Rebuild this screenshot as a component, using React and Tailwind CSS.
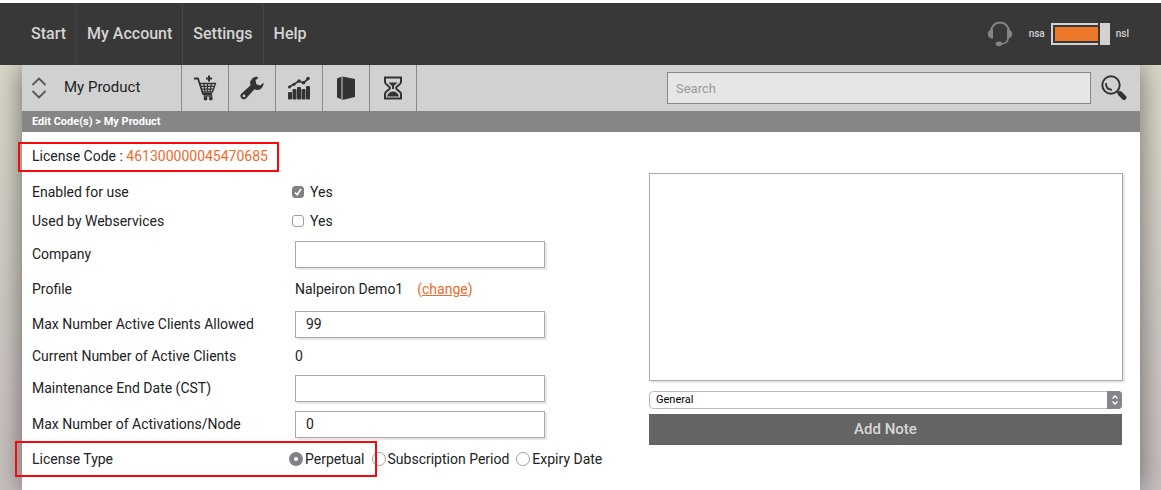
import { useState } from 'react';

const NAV_LINKS = ['Start', 'My Account', 'Settings', 'Help'];

const CartIcon = () => (
  <svg viewBox="0 0 24 26" className="w-6 h-[26px]" fill="none" stroke="#333" strokeWidth="1.8">
    <path d="M1 3.5h4l5 15.5h9" strokeLinejoin="round" />
    <path d="M6 8.5h16.5l-3 8.500H9M7.500 11.300h14M8.400 14.200h12M10.800 8.500l1.200 8.500M14.500 8.500V17M18.400 8.500L17 17" strokeWidth="1.300" />
    <path d="M13 3.500h6M16 .5v6" strokeWidth="2" />
    <path d="M10.500 21h9" strokeWidth="1.500" />
    <circle cx="12.500" cy="23.500" r="1.900" fill="#333" stroke="none" />
    <circle cx="17.800" cy="23.500" r="1.900" fill="#333" stroke="none" />
  </svg>
);

const WrenchIcon = () => (
  <svg viewBox="0 0 24 24" className="w-6 h-6">
    <path
      d="M18.600 1.200a6.300 6.300 0 0 0-8 8.100L1.500 17.500a3.300 3.300 0 0 0 4.700 4.700l8.300-8.900a6.300 6.300 0 0 0 9-6.500l-3.300 2.700-3.800-1.200-.9-3.700zM4 18.600a1.300 1.300 0 1 1 0 2.600 1.300 1.300 0 0 1 0-2.600z"
      fill="#333"
      fillRule="evenodd"
    />
  </svg>
);

const ChartIcon = () => (
  <svg viewBox="0 0 24 24" className="w-6 h-6" fill="#333">
    <rect x="1" y="16" width="4" height="7.500" rx="1" />
    <rect x="5.500" y="13" width="4" height="10.500" rx="1" />
    <rect x="10" y="11" width="4" height="12.500" rx="1" />
    <rect x="14.500" y="13" width="4" height="10.500" rx="1" />
    <rect x="19" y="10" width="4" height="13.500" rx="1" />
    <path d="M2 11l4.500-2.500L12 5l4.500 2L21 3" fill="none" stroke="#333" strokeWidth="1.800" />
    <circle cx="2.500" cy="11" r="1.500" />
    <circle cx="7" cy="8.300" r="1.500" />
    <circle cx="12" cy="5" r="1.700" />
    <circle cx="16.500" cy="6.800" r="1.700" />
    <circle cx="21" cy="2.500" r="1.800" />
  </svg>
);

const BoxIcon = () => (
  <svg viewBox="0 0 20 26" className="w-5 h-[26px]">
    <path d="M1 3.500L6 1.500v23l-5-2z" fill="#333" />
    <path d="M6.500 1.500L19 4v18L6.500 25z" fill="#333" />
    <path d="M5.500 2v22.500" stroke="#999" strokeWidth=".8" />
  </svg>
);

const HourglassIcon = () => (
  <svg viewBox="0 0 20 24" className="w-5 h-6" fill="none" stroke="#333" strokeWidth="2">
    <path d="M2 1.500h16v4.500c0 3-5 4-5 6s5 3 5 6v4.500H2V18c0-3 5-4 5-6S2 9 2 6z" />
    <path d="M5.500 6.500h9L11 10v3h-2v-3z" fill="#333" stroke="none" />
    <path d="M4 20.500c.5-3 3-5 6-5s5.500 2 6 5z" fill="#333" stroke="none" />
  </svg>
);

const HeadsetIcon = () => (
  <svg viewBox="0 0 26 26" className="w-[26px] h-[26px]" fill="none" stroke="#858585">
    <path d="M4 11a9 9.500 0 0 1 18 0" strokeWidth="2" />
    <path d="M6 8.500v9C2 17.500.8 15 .8 13s1.500-4.500 5.200-4.500zM20 8.500v9c4 0 5.200-2.500 5.200-4.500s-1.500-4.500-5.200-4.500z" fill="#858585" stroke="none" />
    <path d="M21.500 16.500c-.5 4-3.500 6.500-8.500 6.500" strokeWidth="1.600" />
    <ellipse cx="12" cy="22.800" rx="3.300" ry="2.400" fill="#858585" stroke="none" />
  </svg>
);

const SearchIcon = () => (
  <svg viewBox="0 0 26 26" className="w-[26px] h-[26px]" fill="none" stroke="#333">
    <circle cx="10" cy="10" r="8.700" strokeWidth="2" />
    <path d="M5 8c-.3 4 2 6.500 6 6.800" strokeWidth="1.800" />
    <path d="M16 16l2.500 2.500" strokeWidth="2" />
    <path d="M19 18.500l4 4" strokeWidth="4.800" strokeLinecap="round" />
  </svg>
);

const TOOLS = [
  { label: 'Add to cart', Icon: CartIcon },
  { label: 'Tools', Icon: WrenchIcon },
  { label: 'Reports', Icon: ChartIcon },
  { label: 'Products', Icon: BoxIcon },
  { label: 'History', Icon: HourglassIcon },
];

const Highlight = ({ className }) => (
  <span className={`absolute border-2 border-[#f80808] pointer-events-none ${className}`} />
);

const Row = ({ label, htmlFor, height = 'h-9', children }) => (
  <div className={`relative flex items-center ${height}`}>
    {htmlFor ? (
      <label htmlFor={htmlFor} className="w-[257px] shrink-0">{label}</label>
    ) : (
      <span className="w-[257px] shrink-0">{label}</span>
    )}
    {children}
  </div>
);

const TextField = ({ id, value = '' }) => (
  <input
    id={id}
    type="text"
    defaultValue={value}
    className="ml-1.5 w-[250px] h-[27px] px-2.5 border border-[#a9a9a9] bg-white shadow-[2px_2px_0_#e8e8e8] outline-none"
  />
);

const Checkbox = ({ id, checked }) => (
  <span className="flex items-center gap-1.5 ml-[3px]">
    <span className="relative grid">
      <input
        id={id}
        type="checkbox"
        defaultChecked={checked}
        className="peer appearance-none w-3 h-3 rounded-[3px] border border-[#a0a0a0] bg-white checked:bg-[#818186] checked:border-[#818186]"
      />
      <svg viewBox="0 0 12 12" className="absolute inset-0 w-3 h-3 opacity-0 peer-checked:opacity-100 pointer-events-none">
        <path d="M3 6.500l2.200 2.300L9 3" fill="none" stroke="#fff" strokeWidth="1.600" />
      </svg>
    </span>
    <label htmlFor={id}>Yes</label>
  </span>
);

const Radio = ({ label, checked }) => (
  <label className="flex items-center gap-0.5">
    <input
      type="radio"
      name="licenseType"
      defaultChecked={checked}
      className="appearance-none w-3.5 h-3.5 rounded-full border border-[#a0a0a0] bg-white checked:border-5 checked:border-[#818186]"
    />
    {label}
  </label>
);

const App = () => {
  const [isNsl, setIsNsl] = useState(true);

  return (
    <div className="min-h-screen flex flex-col pt-[3px] bg-white font-[Roboto,sans-serif] text-sm text-[#222]">
      <header className="flex items-center justify-between h-[62px] pl-[21px] pr-8 bg-[#383838] text-[#d4d4d4]">
        <nav className="flex self-stretch divide-x divide-[#454545]">
          {NAV_LINKS.map((link) => (
            <a key={link} href="#" className="flex items-center px-2.5 text-base font-medium">{link}</a>
          ))}
        </nav>
        <div className="flex items-center text-[10px] font-medium">
          <HeadsetIcon />
          <span className="ml-4 mr-1.5">nsa</span>
          <button
            role="switch"
            aria-checked={isNsl}
            aria-label="nsa or nsl"
            onClick={() => setIsNsl(!isNsl)}
            className={`flex gap-0.5 w-[59px] h-[22px] mr-1.5 ${isNsl ? '' : 'flex-row-reverse'}`}
          >
            <span className="flex-1 h-full border-2 border-r-0 border-[#d2d2d2] py-0.5 pl-0.5">
              <span className="block h-full bg-[#ec7728]" />
            </span>
            <span className="w-2.5 h-full bg-[#d2d2d2]" />
          </button>
          <span>nsl</span>
        </div>
      </header>

      <div className="flex-1 flex pl-[22px] pr-[21px] overflow-hidden bg-linear-to-b from-[#dad8ca] to-[#c8bfbf]">
        <main className="flex-1 bg-white shadow-[0_0_26px_rgba(0,0,0,0.5)]">
          <div className="flex items-center h-[46px] bg-[#d0d2d1]">
            <button className="flex items-center gap-4 w-[159px] h-full pl-2 text-left text-[15px]">
              <svg viewBox="0 0 18 22" className="w-[18px] h-[22px]" fill="none" stroke="#555" strokeWidth="1.800">
                <path d="M2.500 8L9 1.500 15.500 8M2.500 14L9 20.500 15.500 14" />
              </svg>
              My Product
            </button>
            <div className="flex h-full border-r border-[#8a8a8a]">
              {TOOLS.map(({ label, Icon }) => (
                <button
                  key={label}
                  aria-label={label}
                  className="flex items-center justify-center w-[47px] h-full border-l border-[#8a8a8a]"
                >
                  <Icon />
                </button>
              ))}
            </div>
            <input
              type="search"
              aria-label="Search"
              placeholder="Search"
              className="ml-auto w-[424px] h-8 px-2 border border-[#888] bg-[#e6e6e6] text-[13px] placeholder:text-[#999] outline-none"
            />
            <button aria-label="Run search" className="ml-2.5 mr-[13px]">
              <SearchIcon />
            </button>
          </div>

          <div className="h-[21px] pl-2.5 bg-[#868686] text-[11px] leading-[21px] font-bold text-white">
            Edit Code(s) &gt; My Product
          </div>

          <div className="flex pl-2.5 pr-[17px]">
            <form className="w-[617px] shrink-0">
              <p className="relative flex items-center h-[45px] pt-[3px]">
                License Code :&nbsp;<span className="text-[#ec6b2d]">461300000045470685</span>
                <Highlight className="-left-3.5 top-2.5 w-[261px] h-[30px]" />
              </p>
              <Row label="Enabled for use" htmlFor="enabled" height="h-[29px]">
                <Checkbox id="enabled" checked />
              </Row>
              <Row label="Used by Webservices" htmlFor="webservices" height="h-[30px]">
                <Checkbox id="webservices" />
              </Row>
              <Row label="Company" htmlFor="company">
                <TextField id="company" />
              </Row>
              <Row label="Profile" height="h-[34px]">
                <span className="ml-1.5">Nalpeiron Demo1</span>
                <span className="ml-3.5 text-[#ec6b2d]">
                  (<a href="#" className="underline">change</a>)
                </span>
              </Row>
              <Row label="Max Number Active Clients Allowed" htmlFor="maxClients">
                <TextField id="maxClients" value="99" />
              </Row>
              <Row label="Current Number of Active Clients" height="h-7">
                <span className="ml-1.5">0</span>
              </Row>
              <Row label="Maintenance End Date (CST)" htmlFor="endDate">
                <TextField id="endDate" />
              </Row>
              <Row label="Max Number of Activations/Node" htmlFor="maxActivations">
                <TextField id="maxActivations" value="0" />
              </Row>
              <Row label="License Type" height="h-[34px]">
                <div className="flex gap-[7px]">
                  <Radio label="Perpetual" checked />
                  <Radio label="Subscription Period" />
                  <Radio label="Expiry Date" />
                </div>
                <Highlight className="-left-[17px] -top-px w-[362px] h-9" />
              </Row>
            </form>

            <form className="flex-1 pt-[41px]">
              <textarea
                aria-label="Note"
                className="block w-full h-[208px] border border-[#a9a9a9] shadow-[2px_2px_0_#e8e8e8] resize-none outline-none"
              />
              <div className="pr-px">
                <div className="relative mt-2.5">
                  <select
                    aria-label="Note category"
                    className="block appearance-none w-full h-[18px] pl-1.5 rounded border border-[#bbb] bg-white text-[11px] leading-4 text-black"
                  >
                    <option>General</option>
                  </select>
                  <span className="absolute right-0 inset-y-0 flex items-center justify-center w-[15px] rounded-r bg-[#85858a] pointer-events-none">
                    <svg viewBox="0 0 8 12" className="w-2 h-3" fill="none" stroke="#fff" strokeWidth="1.300">
                      <path d="M1.500 4.500L4 2l2.500 2.500M1.500 7.500L4 10l2.500-2.500" />
                    </svg>
                  </span>
                </div>
                <button type="button" className="w-full h-[31px] mt-[5px] bg-[#646464] text-[15px] font-medium text-[#d8d8d8]">
                  Add Note
                </button>
              </div>
            </form>
          </div>
        </main>
      </div>
    </div>
  );
};

export default App;
